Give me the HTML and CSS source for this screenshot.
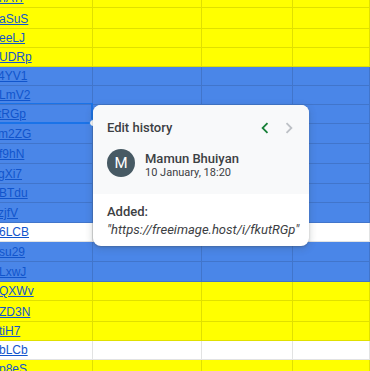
FILE: index.html
```html
<!DOCTYPE html>
<html>
<head>
<meta charset="utf-8">
<link rel="stylesheet" href="styles.css">
</head>
<body>
<div class="sheet">
  <div class="row y h8"><div class="cell"><a class="lnk">hATr</a></div><div class="cell"></div><div class="cell"></div><div class="cell"></div></div>
  <div class="row y h21"><div class="cell"><a class="lnk">aSuS</a></div><div class="cell"></div><div class="cell"></div><div class="cell"></div></div>
  <div class="row y h19"><div class="cell"><a class="lnk">eeLJ</a></div><div class="cell"></div><div class="cell"></div><div class="cell"></div></div>
  <div class="row y h19"><div class="cell"><a class="lnk">UDRp</a></div><div class="cell"></div><div class="cell"></div><div class="cell"></div></div>
  <div class="row b h19"><div class="cell"><a class="lnk clip">4YV1</a></div><div class="cell"></div><div class="cell"></div><div class="cell"></div></div>
  <div class="row b h19"><div class="cell"><a class="lnk">LmV2</a></div><div class="cell"></div><div class="cell"></div><div class="cell"></div></div>
  <div class="row b h19"><div class="cell"><a class="lnk clip">tRGp</a></div><div class="cell"></div><div class="cell"></div><div class="cell"></div></div>
  <div class="row b h20"><div class="cell"><a class="lnk clip">m2ZG</a></div><div class="cell"></div><div class="cell"></div><div class="cell"></div></div>
  <div class="row b h20"><div class="cell"><a class="lnk">f9hN</a></div><div class="cell"></div><div class="cell"></div><div class="cell"></div></div>
  <div class="row b h20"><div class="cell"><a class="lnk clip">gXi7</a></div><div class="cell"></div><div class="cell"></div><div class="cell"></div></div>
  <div class="row b h19"><div class="cell"><a class="lnk">BTdu</a></div><div class="cell"></div><div class="cell"></div><div class="cell"></div></div>
  <div class="row b h20"><div class="cell"><a class="lnk clip">zjfV</a></div><div class="cell"></div><div class="cell"></div><div class="cell"></div></div>
  <div class="row w h19"><div class="cell"><a class="lnk">6LCB</a></div><div class="cell"></div><div class="cell"></div><div class="cell"></div></div>
  <div class="row b h20"><div class="cell"><a class="lnk">su29</a></div><div class="cell"></div><div class="cell"></div><div class="cell"></div></div>
  <div class="row b h20"><div class="cell"><a class="lnk">LxwJ</a></div><div class="cell"></div><div class="cell"></div><div class="cell"></div></div>
  <div class="row y h19"><div class="cell"><a class="lnk">QXWv</a></div><div class="cell"></div><div class="cell"></div><div class="cell"></div></div>
  <div class="row y h21"><div class="cell"><a class="lnk">ZD3N</a></div><div class="cell"></div><div class="cell"></div><div class="cell"></div></div>
  <div class="row y h19"><div class="cell"><a class="lnk">tiH7</a></div><div class="cell"></div><div class="cell"></div><div class="cell"></div></div>
  <div class="row w h19"><div class="cell"><a class="lnk">bLCb</a></div><div class="cell"></div><div class="cell"></div><div class="cell"></div></div>
  <div class="row y h19"><div class="cell"><a class="lnk">p8eS</a></div><div class="cell"></div><div class="cell"></div><div class="cell"></div></div>

  <div class="selection"></div>
  <div class="handle"></div>

  <div class="card">
    <div class="card-top">
      <div class="card-head">
        <div class="title">Edit history</div>
        <div class="nav">
          <svg class="chev" width="22" height="22" viewBox="0 0 24 24"><path fill="#188038" d="M15.41 7.41L14 6l-6 6 6 6 1.41-1.41L10.83 12z"/></svg>
          <svg class="chev" width="22" height="22" viewBox="0 0 24 24"><path fill="#bdc1c6" d="M10 6L8.59 7.41 13.17 12l-4.58 4.59L10 18l6-6z"/></svg>
        </div>
      </div>
      <div class="author">
        <div class="avatar">M</div>
        <div class="who">
          <div class="name">Mamun Bhuiyan</div>
          <div class="date">10 January, 18:20</div>
        </div>
      </div>
    </div>
    <div class="card-body">
      <div class="added">Added:</div>
      <div class="value">"https://freeimage.host/i/fkutRGp"</div>
    </div>
  </div>
</div>
</body>
</html>
```
FILE: styles.css
```css
html, body {
  margin: 0;
  padding: 0;
  overflow: hidden;
  background: #ffffff;
}
.sheet {
  position: relative;
  width: 370px;
  height: 371px;
  overflow: hidden;
  font-family: "Liberation Sans", Arial, sans-serif;
  font-size: 12px;
}
.row {
  display: grid;
  grid-template-columns: 93px 109px 91px 1fr;
  grid-template-rows: 100%;
  box-sizing: border-box;
}
.h8 { height: 8px; }
.h19 { height: 19px; }
.h20 { height: 20px; }
.h21 { height: 21px; }
.row.y { background: #ffff00; }
.row.b { background: #4a86e8; }
.row.w { background: #ffffff; }
.cell {
  box-sizing: border-box;
  min-height: 0;
  border-right: 1px solid rgba(0, 0, 0, 0.12);
  border-bottom: 1px solid rgba(0, 0, 0, 0.12);
  display: flex;
  align-items: flex-end;
  padding-bottom: 2px;
  line-height: 14px;
  overflow: visible;
  white-space: nowrap;
}
.row.w .cell {
  border-color: #e2e3e3;
}
.lnk {
  color: #1155cc;
  text-decoration: underline;
  margin-left: -1px;
}
.lnk.clip {
  margin-left: -2px;
}
.selection {
  position: absolute;
  left: -3px;
  top: 103px;
  width: 96px;
  height: 21px;
  box-sizing: border-box;
  border: 2px solid #1a73e8;
  border-top-width: 1px;
}
.handle {
  position: absolute;
  left: 89px;
  top: 119px;
  width: 8px;
  height: 8px;
  box-sizing: border-box;
  border-radius: 50%;
  background: #ffffff;
  border: 1.5px solid #1a73e8;
}
.card {
  position: absolute;
  left: 93px;
  top: 105px;
  width: 216px;
  border-radius: 8px;
  overflow: hidden;
  background: #ffffff;
  box-shadow: 0 1px 2px rgba(60, 64, 67, 0.3), 0 2px 6px 2px rgba(60, 64, 67, 0.15);
  font-family: Roboto, "Noto Sans", sans-serif;
  color: #3c4043;
}
.card-top {
  background: #f8f9fa;
  padding: 15px 9px 14px 14px;
}
.card-head {
  display: flex;
  align-items: center;
  justify-content: space-between;
  height: 16px;
}
.title {
  font-size: 13px;
  line-height: 16px;
  font-weight: 500;
}
.nav {
  display: flex;
  gap: 2px;
}
.chev {
  display: block;
}
.author {
  display: flex;
  align-items: flex-start;
  gap: 10px;
  margin-top: 13px;
}
.avatar {
  width: 28px;
  height: 28px;
  border-radius: 50%;
  background: #475a64;
  color: #ffffff;
  font-size: 15px;
  line-height: 28px;
  text-align: center;
  flex-shrink: 0;
}
.who {
  margin-top: 2px;
}
.name {
  font-size: 13px;
  line-height: 15px;
  font-weight: 500;
  color: #3c4043;
}
.date {
  font-size: 11px;
  line-height: 14px;
  color: #3c4043;
}
.card-body {
  padding: 10px 14px 8px 14px;
}
.added {
  font-size: 13px;
  line-height: 16px;
  font-weight: 500;
}
.value {
  margin-top: 2px;
  font-size: 13px;
  line-height: 16px;
  font-style: italic;
  white-space: nowrap;
}
```
